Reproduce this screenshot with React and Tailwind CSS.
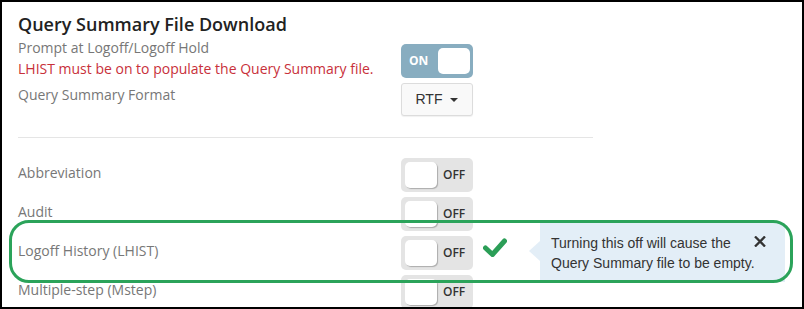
import React from "react";

function OffToggle() {
  return (
    <div className="flex h-[34px] w-[72px] items-center rounded-[5px] bg-[#e4e4e4] pl-[4px]">
      <div className="h-[26px] w-[32px] rounded-[5px] bg-white shadow-[1px_1px_1px_rgba(0,0,0,0.25)]" />
      <span className="ml-[6px] text-[12px] font-semibold text-[#333]">OFF</span>
    </div>
  );
}

function Row({ label, children }) {
  return (
    <div className="flex">
      <div className="w-[383px] pt-[5px] text-[14px] leading-[20px] text-[#777]">{label}</div>
      {children}
    </div>
  );
}

export default function App() {
  return (
    <div
      className="relative h-[309px] w-[804px] overflow-hidden border-2 border-black bg-white pl-[16px] pt-[10px]"
      style={{ fontFamily: '"Open Sans", sans-serif' }}
    >
      <h2 className="text-[18px] font-semibold leading-[24px] text-[#222]">
        Query Summary File Download
      </h2>

      <div className="mt-[1px] flex">
        <div className="w-[383px] text-[14px] leading-[21px]">
          <div className="text-[#777]">Prompt at Logoff/Logoff Hold</div>
          <div className="text-[#c8303a]">LHIST must be on to populate the Query Summary file.</div>
        </div>
        <div className="mt-[7px] flex h-[34px] w-[72px] items-center justify-between rounded-[5px] bg-[#88adc0] pl-[8px] pr-[3px]">
          <span className="text-[12px] font-bold text-white">ON</span>
          <div className="h-[26px] w-[32px] rounded-[5px] bg-white" />
        </div>
      </div>

      <div className="mt-[4px] flex">
        <div className="w-[383px] pt-[2px] text-[14px] leading-[20px] text-[#777]">Query Summary Format</div>
        <div
          className="flex h-[33px] w-[72px] items-center justify-center gap-[8px] rounded-[3px] border border-[#dcdcdc] bg-[#f9f9f9] shadow-[0_1px_1px_rgba(0,0,0,0.06)]"
          style={{ fontFamily: '"Liberation Sans", Arial, sans-serif' }}
        >
          <span className="text-[14px] text-[#333]">RTF</span>
          <svg width="8" height="4" viewBox="0 0 8 4"><path d="M0 0h8L4 4z" fill="#333" /></svg>
        </div>
      </div>

      <div className="mt-[21px] h-px w-[575px] bg-[#e5e5e5]" />

      <div className="mt-[20px] flex flex-col gap-[5px]">
        <Row label="Abbreviation"><OffToggle /></Row>
        <Row label="Audit"><OffToggle /></Row>
        <div className="relative">
          <Row label="Logoff History (LHIST)"><OffToggle /></Row>
          <svg
            className="absolute left-[465px] top-[2px]"
            width="24"
            height="19"
            viewBox="0 0 24 19"
          >
            <path d="M2.5 10l7 6.5L21.5 3" fill="none" stroke="#2b9e57" strokeWidth="5" strokeLinecap="round" strokeLinejoin="round" />
          </svg>
          <div className="absolute left-[522px] top-[-13px]">
            <div className="relative h-[59px] w-[245px] bg-[#e3eef7] pl-[11px] pt-[10px] text-[14px] leading-[20px] text-[#333]" style={{ fontFamily: '"Liberation Sans", Arial, sans-serif' }}>
              <div className="absolute left-[-11px] top-[18px] h-0 w-0 border-y-[10px] border-r-[11px] border-y-transparent border-r-[#e3eef7]" />
              <div>Turning this off will cause the</div>
              <div>Query Summary file to be empty.</div>
              <svg className="absolute left-[214px] top-[13px]" width="12" height="11" viewBox="0 0 12 11">
                <path d="M1 0.5l10 10M11 0.5l-10 10" stroke="#333" strokeWidth="2.3" />
              </svg>
            </div>
          </div>
        </div>
        <Row label="Multiple-step (Mstep)"><OffToggle /></Row>
      </div>

      <div className="pointer-events-none absolute left-[7px] top-[218px] h-[63px] w-[784px] rounded-[20px] border-[3px] border-[#2ba35a]" />
    </div>
  );
}
